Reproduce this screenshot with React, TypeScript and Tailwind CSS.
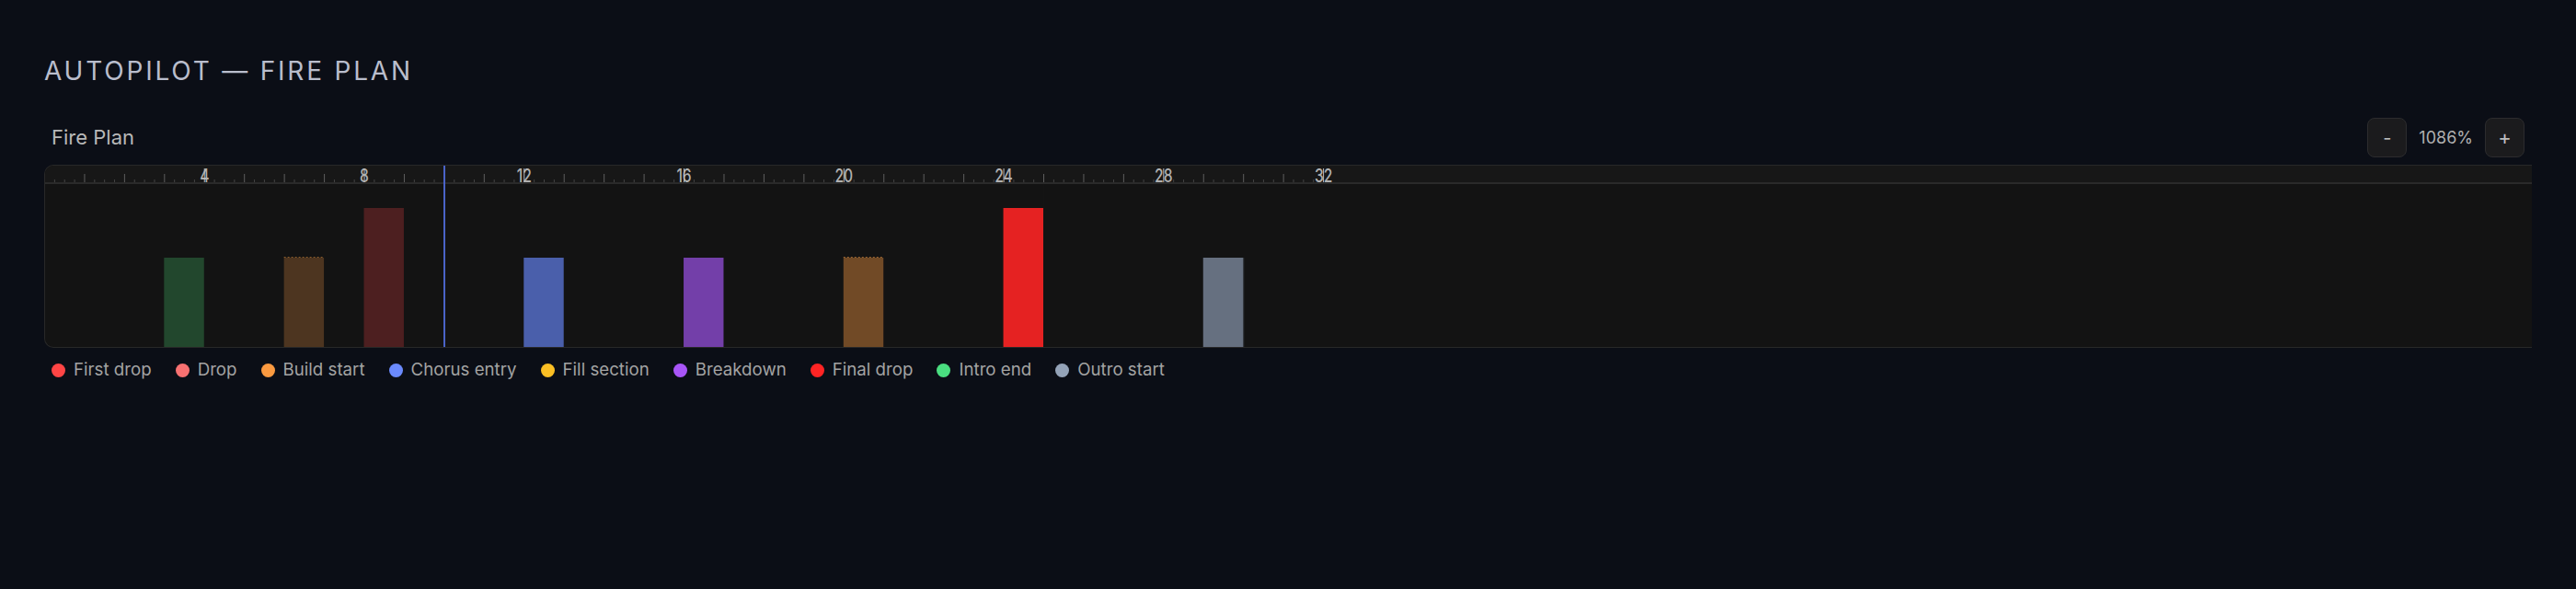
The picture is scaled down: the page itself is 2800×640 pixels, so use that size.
import React from 'react';

const PX_PER_BEAT = 4 * 10.86;
const TOTAL_BEATS = 32;

interface Cue {
  beat: number;
  color: string;
  tall?: boolean;
  dotted?: string;
}

const cues: Cue[] = [
  { beat: 3, color: '#22472d' },
  { beat: 6, color: '#4d3520', dotted: '#8a5c2c' },
  { beat: 8, color: '#4d1f20', tall: true },
  { beat: 12, color: '#4a5fab' },
  { beat: 16, color: '#733fa9' },
  { beat: 20, color: '#714a26', dotted: '#9a6633' },
  { beat: 24, color: '#e52222', tall: true },
  { beat: 29, color: '#667080' },
];

const legend = [
  { label: 'First drop', color: '#ff4545' },
  { label: 'Drop', color: '#f87171' },
  { label: 'Build start', color: '#fb9a40' },
  { label: 'Chorus entry', color: '#6b8afd' },
  { label: 'Fill section', color: '#fbbf24' },
  { label: 'Breakdown', color: '#a855f7' },
  { label: 'Final drop', color: '#ff2424' },
  { label: 'Intro end', color: '#4ade80' },
  { label: 'Outro start', color: '#94a3b8' },
];

// x inside the chart box (its left border is 1px)
const bx = (beat: number) => beat * PX_PER_BEAT - 1;

function Ruler() {
  const minor: number[] = [];
  for (let q = 0; q <= TOTAL_BEATS * 4; q++) if (q % 4 !== 0) minor.push(q / 4);
  const major: number[] = [];
  for (let b = 0; b <= TOTAL_BEATS; b++) major.push(b);

  return (
    <svg className="absolute inset-0 h-full w-full overflow-visible">
      {minor.map(b => (
        <line key={'m' + b} x1={bx(b) + 0.5} x2={bx(b) + 0.5} y1={15} y2={18} stroke="#444" strokeWidth={1} />
      ))}
      {major.map(b =>
        b % 4 === 0 && b > 0 ? (
          <g key={'M' + b}>
            <text
              transform={`translate(${bx(b) + 0.5},17.5) scale(0.78,1)`}
              textAnchor="middle"
              fontSize={20}
              fontWeight={500}
              fill="#b0b0b0"
              fontFamily="Inter, 'Liberation Sans', sans-serif"
            >
              {b}
            </text>
            <line x1={bx(b) + 0.5} x2={bx(b) + 0.5} y1={3} y2={18} stroke="#bdbdbd" strokeWidth={1} />
          </g>
        ) : (
          <line key={'M' + b} x1={bx(b) + 0.5} x2={bx(b) + 0.5} y1={b === 0 ? 7 : 9} y2={18} stroke="#5e5e5e" strokeWidth={1} />
        )
      )}
    </svg>
  );
}

function Bars() {
  return (
    <svg className="absolute inset-0 h-full w-full">
      {Array.from({ length: TOTAL_BEATS }, (_, i) => i + 1).map(b => (
        <line key={b} x1={bx(b) + 0.5} x2={bx(b) + 0.5} y1={0} y2={177} stroke="#ffffff" strokeOpacity={0.008} />
      ))}
      {cues.map(c => {
        const top = c.tall ? 26 : 80;
        return (
          <g key={c.beat}>
            <rect x={bx(c.beat)} y={top} width={PX_PER_BEAT} height={177 - top} fill={c.color} />
            {c.dotted && (
              <line
                x1={bx(c.beat)}
                x2={bx(c.beat) + PX_PER_BEAT}
                y1={top - 0.5}
                y2={top - 0.5}
                stroke={c.dotted}
                strokeWidth={1}
                strokeDasharray="2 2"
              />
            )}
          </g>
        );
      })}
      <line x1={bx(30) + 0.5} x2={bx(30) + 0.5} y1={80} y2={177} stroke="#3a3f48" strokeWidth={1} />
    </svg>
  );
}

export default function App() {
  return (
    <div
      className="min-h-[640px] bg-[#0b0e16] px-12 pt-[60px]"
      style={{ fontFamily: "Inter, 'Liberation Sans', sans-serif" }}
    >
      <h1 className="text-[28px] leading-[34px] tracking-[0.1em] text-[#b9bdcc] font-normal">
        AUTOPILOT — FIRE PLAN
      </h1>

      <div className="mt-[34px] flex h-[43px] items-center justify-between px-2">
        <span className="text-[22px] text-[#b8b8b8]">Fire Plan</span>
        <div className="flex items-center gap-[13px]">
          <button className="flex h-[43px] w-[43px] items-center justify-center rounded-[8px] border border-[#2c2c2e] bg-[#1b1b1d] text-[20px] text-[#bdbdbd]">
            -
          </button>
          <span className="text-[18px] text-[#b0b0b0]">1086%</span>
          <button className="flex h-[43px] w-[43px] items-center justify-center rounded-[8px] border border-[#2c2c2e] bg-[#1b1b1d] text-[22px] text-[#bdbdbd]">
            +
          </button>
        </div>
      </div>

      <div className="relative mt-2 overflow-hidden rounded-l-[10px] border border-r-0 border-[#282828] bg-[#131313]">
        <div className="relative h-[20px] border-b-2 border-[#2a2a2a] bg-[#171717]">
          <Ruler />
        </div>
        <div className="relative h-[177px]">
          <Bars />
        </div>
        <div
          className="absolute top-0 bottom-0 w-[2px] bg-[#4a63c8]"
          style={{ left: bx(10) - 0.5 }}
        />
      </div>

      <div className="mt-[11px] flex items-center gap-[26px] pl-2 text-[18.7px] leading-[26px] text-[#a3a3a3]">
        {legend.map(l => (
          <div key={l.label} className="flex items-center gap-[9px]">
            <span className="h-[15px] w-[15px] rounded-full" style={{ background: l.color }} />
            <span>{l.label}</span>
          </div>
        ))}
      </div>
    </div>
  );
}
